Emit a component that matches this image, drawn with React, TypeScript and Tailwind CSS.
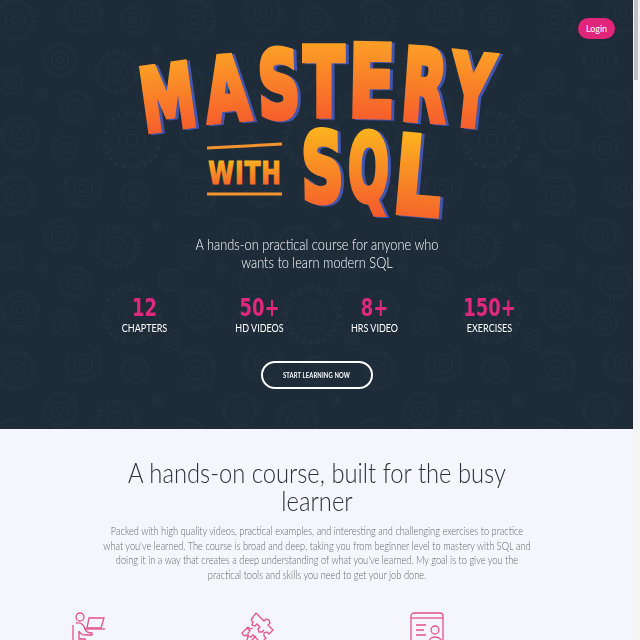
import React from 'react';

// --- Background gears ---

const Gear = ({ x, y, r }: { x: number; y: number; r: number }) => (
  <g fill="none" stroke="#233140">
    <circle cx={x} cy={y} r={r} strokeWidth={r * 0.12} strokeDasharray={`${r * 0.12} ${r * 0.14}`} />
    <circle cx={x} cy={y} r={r * 0.88} strokeWidth={1} />
    <circle cx={x} cy={y} r={r * 0.48} strokeWidth={1} />
    <circle cx={x} cy={y} r={r * 0.2} strokeWidth={1} />
  </g>
);

const gears = [
  [15, 20, 20], [83, 13, 19], [135, 20, 14], [60, 60, 17], [117, 72, 21], [157, 50, 4],
  [10, 82, 13], [42, 93, 5], [75, 107, 16], [20, 135, 19], [132, 140, 28], [65, 148, 13],
  [170, 105, 12], [175, 165, 10],
];

const GearPattern = () => (
  <svg className="absolute inset-0 w-full h-full" aria-hidden="true">
    <defs>
      <pattern id="gears" width="180" height="175" patternUnits="userSpaceOnUse">
        {gears.map(([x, y, r]) => (
          <Gear key={`${x}-${y}`} x={x} y={y} r={r} />
        ))}
      </pattern>
    </defs>
    <rect width="100%" height="100%" fill="url(#gears)" />
  </svg>
);

// --- Logo ---

type LogoLetter = { c: string; x: number; y: number; rot: number; sx: number; sy: number };

const topLetters: LogoLetter[] = [
  { c: 'M', x: 172, y: 128, rot: -8, sx: 0.76, sy: 1.2 },
  { c: 'A', x: 230, y: 120, rot: -5, sx: 0.78, sy: 1.22 },
  { c: 'S', x: 280, y: 117, rot: -2, sx: 0.8, sy: 1.28 },
  { c: 'T', x: 324, y: 116, rot: 0, sx: 0.82, sy: 1.3 },
  { c: 'E', x: 371, y: 116, rot: 1, sx: 0.92, sy: 1.36 },
  { c: 'R', x: 422, y: 120, rot: 4, sx: 0.8, sy: 1.36 },
  { c: 'Y', x: 468, y: 125, rot: 6, sx: 0.78, sy: 1.36 },
];

const bottomLetters: LogoLetter[] = [
  { c: 'S', x: 323, y: 201, rot: -1, sx: 0.8, sy: 1.32 },
  { c: 'Q', x: 368, y: 200, rot: 1, sx: 0.66, sy: 1.28 },
  { c: 'L', x: 415, y: 213, rot: 5, sx: 1.02, sy: 1.46 },
];

const Letters = ({ letters, fill }: { letters: LogoLetter[]; fill: string }) => (
  <g className="drop-shadow-[3px_1px_0_#4355ad]">
    {letters.map(l => (
      <text
        key={l.c}
        transform={`translate(${l.x} ${l.y}) rotate(${l.rot}) scale(${l.sx} ${l.sy})`}
        textAnchor="middle"
        fontFamily="'DejaVu Sans', sans-serif"
        fontWeight="700"
        fontSize="72"
        fill={fill}
        stroke={fill}
        strokeWidth="5"
        strokeLinejoin="miter"
      >
        {l.c}
      </text>
    ))}
  </g>
);

const Logo = () => (
  <svg className="relative block w-[633px] h-[232px]" viewBox="0 0 633 232">
    <defs>
      <linearGradient id="logoTop" gradientUnits="objectBoundingBox" x1="0" y1="0" x2="0" y2="1">
        <stop offset="0" stopColor="#fdac24" />
        <stop offset="1" stopColor="#f44e2e" />
      </linearGradient>
      <linearGradient id="logoBottom" gradientUnits="objectBoundingBox" x1="0" y1="0" x2="0" y2="1">
        <stop offset="0" stopColor="#fdc31c" />
        <stop offset="1" stopColor="#f4522e" />
      </linearGradient>
    </defs>
    <Letters letters={topLetters} fill="url(#logoTop)" />
    <Letters letters={bottomLetters} fill="url(#logoBottom)" />
    <path d="M207 148 L282 144" stroke="#f59331" strokeWidth="3" />
    <path d="M207 194 L282 194" stroke="#f59331" strokeWidth="3" />
    <text
      transform="translate(245 184) scale(0.9 1.2)"
      textAnchor="middle"
      fontFamily="'DejaVu Sans', sans-serif"
      fontWeight="700"
      fontSize="26"
      letterSpacing="1"
      fill="url(#logoBottom)"
      stroke="url(#logoBottom)"
      strokeWidth="1"
    >
      WITH
    </text>
  </svg>
);

// --- Feature icons ---

const LaptopIcon = () => (
  <svg className="w-[34px] h-[40px]" viewBox="0 0 34 40" fill="none" stroke="#e4528f" strokeWidth="1.3">
    <circle cx="8" cy="6" r="4" />
    <path d="M1 14v14c0 4 3 7 7 7h5l3 5" />
    <path d="M4 12c6-1 8 2 9 6 1 3 4 4 7 4v2h-7c-3 0-5-2-6-4v8h6l5 12" />
    <path d="M17 7h15l-3 10H15z" />
    <path d="M12 18h21" />
  </svg>
);

const PuzzleIcon = () => (
  <svg className="w-[34px] h-[40px]" viewBox="0 0 34 40" fill="none" stroke="#e4528f" strokeWidth="1.3">
    <path d="M15 2l8 8 2-2 3 1 1 3-2 2 5 5-4 4-2-2-3 1 0 3 2 2-5 5-8-8-2 2-3-1 0-3 2-2-3-3" />
    <path d="M10 9l5-7M10 9l2 2-1 3 3 1 2-2 3 3-2 2 1 3 3 0 2-2" />
    <path d="M7 16L1 22l2 3 2-1 2 2-1 3 3 2 6-6" />
    <path d="M7 16l2 2 3-1" />
  </svg>
);

const ProfileIcon = () => (
  <svg className="w-[34px] h-[40px]" viewBox="0 0 34 40" fill="none" stroke="#e4528f" strokeWidth="1.3">
    <path d="M1 32V5a3 3 0 0 1 3-3h26a3 3 0 0 1 3 3v27" />
    <path d="M1 7h32" />
    <path d="M6 14h10M6 19h8M6 24h10" />
    <circle cx="25" cy="19" r="4" />
    <path d="M18 34c0-5 3-8 7-8s8 3 8 8" />
  </svg>
);

const stats = [
  { value: '12', label: 'CHAPTERS' },
  { value: '50+', label: 'HD VIDEOS' },
  { value: '8+', label: 'HRS VIDEO' },
  { value: '150+', label: 'EXERCISES' },
];

export default function App() {
  return (
    <div className="h-[640px] flex overflow-hidden font-['Lato',sans-serif]">
      <main className="w-[633px] shrink-0">
        {/* Hero */}
        <section className="relative h-[429px] bg-[#1e2b38] flex flex-col items-center overflow-hidden">
          <GearPattern />
          <a className="absolute top-[18px] right-[18px] w-[37px] h-[21px] rounded-full bg-[#e0257a] text-white text-[9px] flex items-center justify-center">
            Login
          </a>
          <Logo />
          <p className="relative mt-[3px] w-[320px] text-center text-white font-light text-[16px] leading-[18px] scale-x-[0.8]">
            A hands-on practical course for anyone who wants to learn modern SQL
          </p>
          <div className="relative mt-[24px] w-[460px] grid grid-cols-4 text-center">
            {stats.map(s => (
              <div key={s.label}>
                <div className="text-[#e0287d] text-[25px] leading-[26px] font-bold font-['DejaVu_Sans',sans-serif] scale-x-[0.72]">{s.value}</div>
                <div className="text-white text-[12px] leading-[14px] scale-x-[0.75]">{s.label}</div>
              </div>
            ))}
          </div>
          <button className="relative mt-[26px] w-[112px] h-[28px] rounded-full border-2 border-white text-white text-[7px] font-bold tracking-[0.2px]">
            <span className="inline-block scale-x-[0.83]">START LEARNING NOW</span>
          </button>
        </section>

        {/* Intro */}
        <section className="h-[4480px] bg-[#f4f6fb]">
          <h2 className="pt-[30px] mx-auto w-[470px] text-center text-[#2d3238] text-[27px] leading-[28px] font-light scale-x-[0.88]">
            A hands-on course, built for the busy learner
          </h2>
          <p className="mt-[9px] mx-auto w-[510px] text-center text-[#666] text-[11px] leading-[14.5px] font-light scale-x-[0.84]">
            Packed with high quality videos, practical examples, and interesting and challenging exercises to practice what you've learned. The course is broad and deep, taking you from beginner level to mastery with SQL and doing it in a way that creates a deep understanding of what you've learned. My goal is to give you the practical tools and skills you need to get your job done.
          </p>
          <div className="mt-[29px] pl-[72px] flex gap-[135px]">
            <LaptopIcon />
            <PuzzleIcon />
            <ProfileIcon />
          </div>
        </section>
      </main>

      {/* Page scrollbar */}
      <div className="flex-1 bg-[#f5f5f5] pl-px pr-[2px]">
        <div className="h-[80px] bg-[#c1c1c1]" />
      </div>
    </div>
  );
}
